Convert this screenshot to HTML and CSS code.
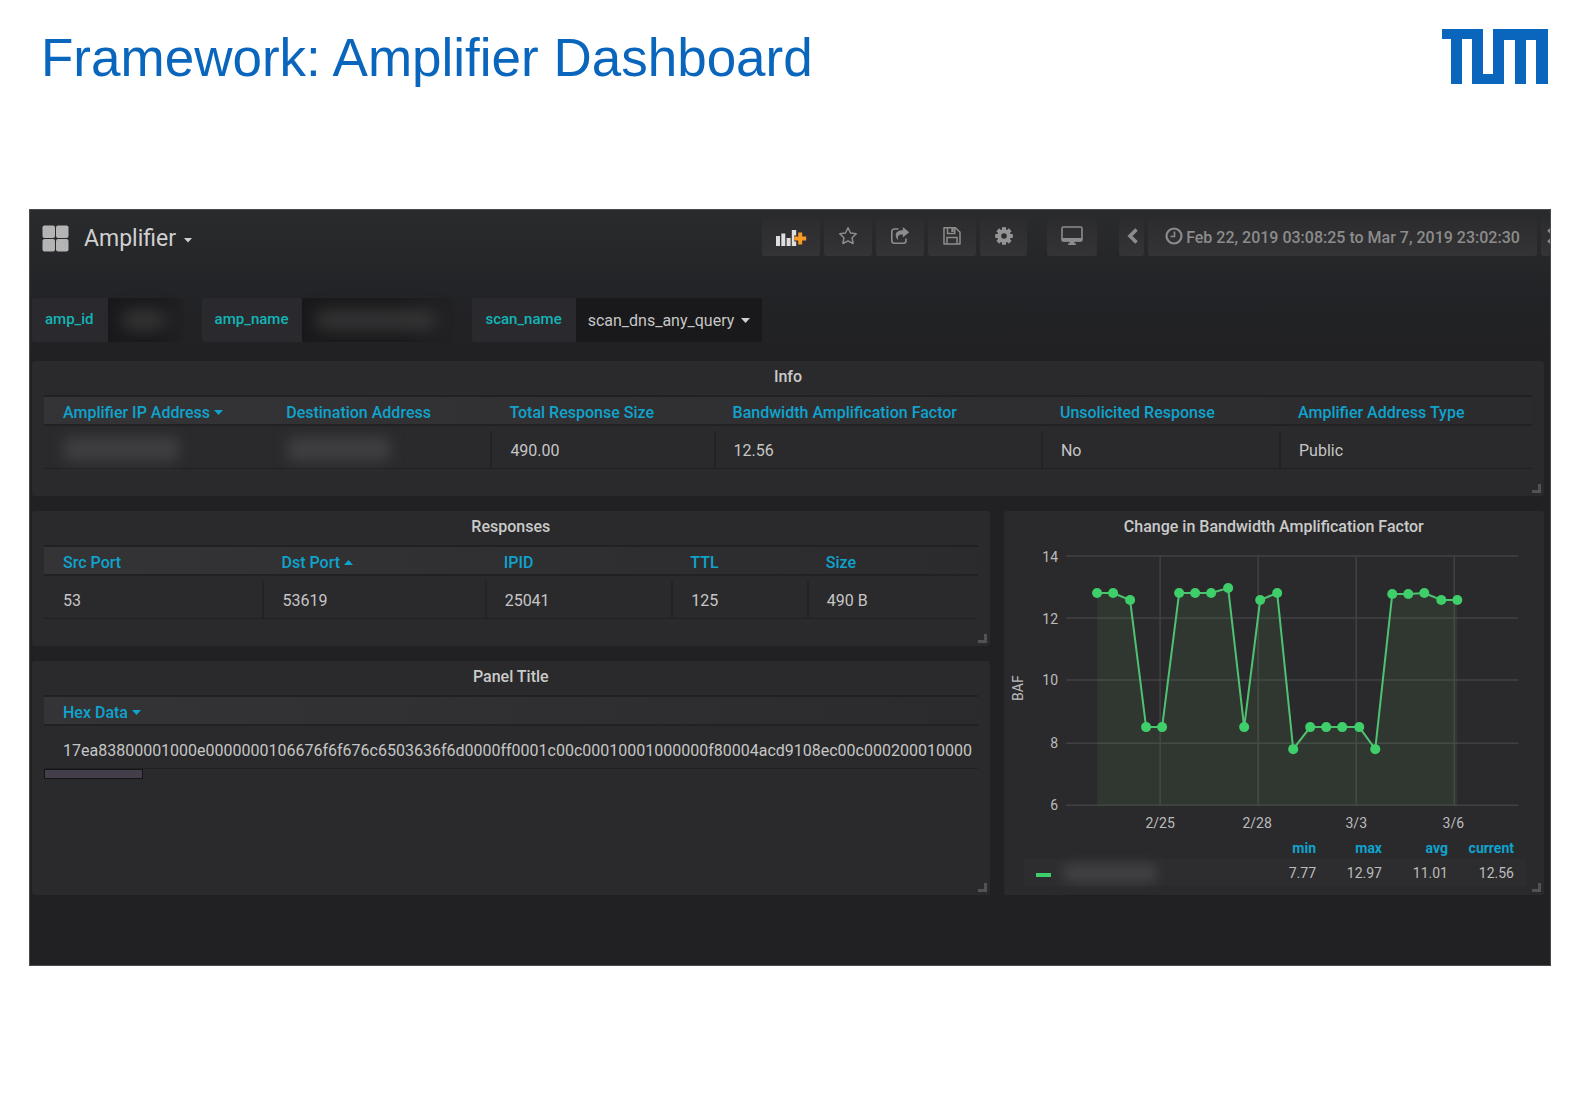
FILE: index.html
```html
<!DOCTYPE html>
<html lang="en">
<head>
<meta charset="utf-8">
<title>Framework: Amplifier Dashboard</title>
<link rel="stylesheet" href="styles.css">
</head>
<body>
<header class="slide-header">
  <h1>Framework: Amplifier Dashboard</h1>
  <svg class="logo" viewBox="0 0 106 55" role="img" aria-label="TUM"><path fill="#0a66bd" d="M0 0H41V45H51V0H106V55H94V11H84V55H73V11H62V55H30V10H20V55H9V10H0Z"/></svg>
</header>

<main class="dashboard">
  <nav class="toolbar" aria-label="Dashboard toolbar">
    <button class="dash-name" type="button">
      <svg width="27" height="27" viewBox="0 0 27 27" fill="#b4b4b4"><rect x="0.500" y="0.500" width="12.500" height="12.500" rx="2"/><rect x="14" y="0.500" width="12.500" height="12.500" rx="2"/><rect x="0.500" y="14" width="12.500" height="12.500" rx="2"/><rect x="14" y="14" width="12.500" height="12.500" rx="2"/></svg>
      <span>Amplifier</span>
      <svg class="name-caret" width="8" height="5" viewBox="0 0 8 5"><path fill="#d0d0d0" d="M0 0H8L4 4.500Z"/></svg>
    </button>
    <div class="actions">
      <button class="btn btn-add" type="button" aria-label="Add panel">
        <svg width="31" height="18" viewBox="0 0 31 18"><path fill="#dedede" d="M0 7h4v10H0zM5.300 4.500h4V17h-4zM10.600 9h4v8h-4zM15.800 1h4.400v5.500h-2v6h2V17h-4.400z"/><path fill="#f59a23" d="M22.200 3.500h4v4h4v4h-4v4h-4v-4h-4v-4h4z"/></svg>
      </button>
      <button class="btn" type="button" aria-label="Star">
        <svg width="20" height="20" viewBox="0 0 20 20"><path fill="none" stroke="#8c8c8c" stroke-width="1.500" stroke-linejoin="round" d="M10 1.800l2.500 5.200 5.700.8-4.100 4 1 5.700L10 14.800l-5.100 2.700 1-5.700-4.100-4 5.700-.8z"/></svg>
      </button>
      <button class="btn" type="button" aria-label="Share">
        <svg width="20" height="20" viewBox="0 0 20 20"><path fill="none" stroke="#8c8c8c" stroke-width="1.600" d="M8.500 3H4.500Q1.800 3 1.800 5.700V14.500Q1.800 17.200 4.500 17.200H13.300Q16 17.200 16 14.500V12.500"/><path fill="#8c8c8c" d="M12.800 1l6.400 5.300-6.400 5.300V8.500C8.700 8.400 7 10 8.300 14.300 4.600 11 3.900 4.300 12.800 4.200z"/></svg>
      </button>
      <button class="btn" type="button" aria-label="Save">
        <svg width="20" height="20" viewBox="0 0 20 20"><g fill="none" stroke="#8c8c8c" stroke-width="1.500"><path stroke-linejoin="round" d="M2 1.800H13.500L18 6.300V18H2Z"/><path d="M5 18V11.500H15V18M5.500 2V7.500H12.800V2"/></g><path fill="#8c8c8c" d="M9.300 2h2.400v4H9.300z"/></svg>
      </button>
      <button class="btn btn-gear" type="button" aria-label="Settings">
        <svg width="20" height="20" viewBox="-10 -10 20 20"><g fill="#949494"><rect x="-2" y="-8.800" width="4" height="17.600"/><rect x="-2" y="-8.800" width="4" height="17.600" transform="rotate(45)"/><rect x="-2" y="-8.800" width="4" height="17.600" transform="rotate(90)"/><rect x="-2" y="-8.800" width="4" height="17.600" transform="rotate(135)"/><circle r="6.700"/></g><circle r="2.800" fill="#2f2f31"/></svg>
      </button>
      <button class="btn btn-tv" type="button" aria-label="Cycle view mode">
        <svg width="24" height="22" viewBox="0 0 24 22"><rect x="2" y="2" width="20" height="14" rx="1.500" fill="none" stroke="#8c8c8c" stroke-width="1.600"/><path fill="#8c8c8c" d="M2 13h20v3.500H2zM9.500 16h5v2.500H16V20H8v-1.500h1.500z"/></svg>
      </button>
      <button class="btn btn-shift" type="button" aria-label="Shift time backwards">
        <svg width="12" height="18" viewBox="0 0 12 18"><path fill="none" stroke="#8c8c8c" stroke-width="3.600" d="M10.500 2.500L4 9L10.500 15.500"/></svg>
      </button>
      <button class="btn btn-time" type="button">
        <svg width="18" height="18" viewBox="0 0 18 18"><g fill="none" stroke="#8c8c8c"><circle cx="9" cy="9" r="7.500" stroke-width="2.200"/><path stroke-width="1.600" d="M9.500 4.500V9.500H5.500"/></g></svg>
        <span>Feb 22, 2019 03:08:25 to Mar 7, 2019 23:02:30</span>
      </button>
      <button class="btn btn-next" type="button" aria-label="Shift time forwards">
        <svg width="12" height="18" viewBox="0 0 12 18"><path fill="none" stroke="#8c8c8c" stroke-width="3.600" d="M1.500 2.500L8 9L1.500 15.500"/></svg>
      </button>
    </div>
  </nav>

  <form class="variables">
    <div class="variable">
      <label for="amp-id">amp_id</label>
      <div class="picker redacted"><select id="amp-id" class="pick-id"><option></option></select><span class="smudge"></span></div>
    </div>
    <div class="variable">
      <label for="amp-name">amp_name</label>
      <div class="picker redacted"><select id="amp-name" class="pick-name"><option></option></select><span class="smudge"></span></div>
    </div>
    <div class="variable">
      <label for="scan-name">scan_name</label>
      <div class="picker">
        <select id="scan-name" class="pick-scan"><option>scan_dns_any_query</option></select>
        <svg class="pick-caret" width="9" height="5" viewBox="0 0 9 5"><path fill="#d0d0d0" d="M0 0H9L4.500 5Z"/></svg>
      </div>
    </div>
  </form>

  <div class="grid">
    <section class="panel panel-wide">
      <h2>Info</h2>
      <table class="data">
        <colgroup><col class="w15"><col class="w15"><col class="w15"><col class="w22"><col class="w16"><col></colgroup>
        <thead><tr><th>Amplifier IP Address <svg width="9" height="5" viewBox="0 0 9 5"><path d="M0 0H9L4.500 5Z"/></svg></th><th>Destination Address</th><th>Total Response Size</th><th>Bandwidth Amplification Factor</th><th>Unsolicited Response</th><th>Amplifier Address Type</th></tr></thead>
        <tbody><tr><td><span class="smudge-text"></span></td><td class="no-rule"><span class="smudge-text smudge-short"></span></td><td>490.00</td><td>12.56</td><td>No</td><td>Public</td></tr></tbody>
      </table>
    </section>

    <section class="panel">
      <h2>Responses</h2>
      <table class="data">
        <colgroup><col class="r1"><col class="r2"><col class="r3"><col class="r4"><col></colgroup>
        <thead><tr><th>Src Port</th><th>Dst Port <svg width="9" height="5" viewBox="0 0 9 5"><path d="M0 5H9L4.500 0Z"/></svg></th><th>IPID</th><th>TTL</th><th>Size</th></tr></thead>
        <tbody><tr><td>53</td><td>53619</td><td>25041</td><td>125</td><td>490 B</td></tr></tbody>
      </table>
    </section>

    <section class="panel panel-graph">
      <h2>Change in Bandwidth Amplification Factor</h2>
      <svg class="chart" viewBox="0 1 540 291" role="img" aria-label="Bandwidth amplification factor over time">
        <g stroke="#414143" stroke-width="1.500">
          <path d="M62 12H514M62 74H514M62 136H514M62 199H514M62 261H514"/>
          <path d="M156 12V261M254 12V261M352 12V261M450 12V261"/>
        </g>
        <path fill="#58a850" fill-opacity=".11" d="M93 261V49H109L126 56L142 183H158L175 49H207L224 44L240 183L256 56L273 49L289 205L306 183H355L371 205L388 50H404L420 49L437 56H453V261Z"/>
        <polyline fill="none" stroke="#4fc272" stroke-width="2" points="93,49 109,49 126,56 142,183 158,183 175,49 191,49 207,49 224,44 240,183 256,56 273,49 289,205 306,183 322,183 338,183 355,183 371,205 388,50 404,50 420,49 437,56 453,56"/>
        <g fill="#3fcf6a">
          <circle cx="93" cy="49" r="5"/><circle cx="109" cy="49" r="5"/><circle cx="126" cy="56" r="5"/><circle cx="142" cy="183" r="5"/><circle cx="158" cy="183" r="5"/><circle cx="175" cy="49" r="5"/><circle cx="191" cy="49" r="5"/><circle cx="207" cy="49" r="5"/><circle cx="224" cy="44" r="5"/><circle cx="240" cy="183" r="5"/><circle cx="256" cy="56" r="5"/><circle cx="273" cy="49" r="5"/><circle cx="289" cy="205" r="5"/><circle cx="306" cy="183" r="5"/><circle cx="322" cy="183" r="5"/><circle cx="338" cy="183" r="5"/><circle cx="355" cy="183" r="5"/><circle cx="371" cy="205" r="5"/><circle cx="388" cy="50" r="5"/><circle cx="404" cy="50" r="5"/><circle cx="420" cy="49" r="5"/><circle cx="437" cy="56" r="5"/><circle cx="453" cy="56" r="5"/>
        </g>
        <g class="tick tick-y"><text x="54" y="18">14</text><text x="54" y="80">12</text><text x="54" y="141">10</text><text x="54" y="204">8</text><text x="54" y="266">6</text></g>
        <g class="tick tick-x"><text x="156" y="284">2/25</text><text x="253" y="284">2/28</text><text x="352" y="284">3/3</text><text x="449" y="284">3/6</text></g>
        <text class="axis-name" transform="translate(19 144) rotate(-90)">BAF</text>
      </svg>
      <table class="legend">
        <thead><tr><th class="series"></th><th>min</th><th>max</th><th>avg</th><th>current</th></tr></thead>
        <tbody><tr><td class="series"><span class="dash"></span><span class="smudge-series"></span></td><td>7.77</td><td>12.97</td><td>11.01</td><td>12.56</td></tr></tbody>
      </table>
    </section>

    <section class="panel panel-hex">
      <h2>Panel Title</h2>
      <div class="scroller">
        <table class="data">
          <thead><tr><th>Hex Data <svg width="9" height="5" viewBox="0 0 9 5"><path d="M0 0H9L4.500 5Z"/></svg></th></tr></thead>
          <tbody><tr><td>17ea83800001000e0000000106676f6f676c6503636f6d0000ff0001c00c00010001000000f80004acd9108ec00c000200010000</td></tr></tbody>
        </table>
      </div>
      <div class="thumb"></div>
    </section>
  </div>
</main>
</body>
</html>
```
FILE: styles.css
```css
* { box-sizing: border-box; }
body { margin: 0; background: #fff; font-family: Roboto, "Liberation Sans", sans-serif; font-size: 16px; color: #c6c6c6; }
button, select { font: inherit; color: inherit; border: 0; margin: 0; padding: 0; }

.slide-header { display: flex; justify-content: space-between; align-items: flex-start; padding: 28px 22px 0 41px; height: 209px; }
h1 { margin: 0; font: 400 53px/60px "Liberation Sans", Arial, sans-serif; color: #0a66bd; }
.logo { width: 106px; height: 55px; margin-top: 1px; flex: none; }

.dashboard { margin: 0 19px 0 29px; padding-bottom: 70px; border: 1px solid #4a4a4b; background: linear-gradient(#2a2b2d, #222326 90px, #212123 150px); overflow: hidden; }

.toolbar { display: flex; justify-content: space-between; height: 88px; padding: 9px 0 0 12px; }
.dash-name { display: flex; align-items: center; height: 38px; background: none; font-size: 23px; color: #d0d0d0; }
.dash-name span { margin-left: 15px; }
.name-caret { margin: 5px 0 0 8px; }
.actions { display: flex; gap: 4px; overflow: hidden; }
.btn { display: flex; align-items: center; justify-content: center; flex: none; width: 48px; height: 37px; border-radius: 3px; background: linear-gradient(#2c2c2e, #343436); color: #8c8c8c; overflow: hidden; }
.btn svg { margin-bottom: 3px; }
.btn-add svg { margin-bottom: 0; }
.btn-add { width: 58px; }
.btn-gear { width: 47px; }
.btn-tv { width: 50px; margin: 0 18px 0 16px; }
.btn-shift { width: 25px; }
.btn-time { width: 389px; font-weight: 500; gap: 3px; }
.btn-next { width: 9px; justify-content: flex-start; padding-left: 6px; }
.btn-next svg { flex: none; }

.variables { display: flex; padding-left: 2px; gap: 16px; margin-bottom: 19px; }
.variable { display: flex; height: 44px; font-weight: 500; }
.variable label { display: flex; align-items: center; padding: 0 14px 2px 13px; border-radius: 3px 0 0 3px; background: #2a2a2e; color: #13b4b6; font-size: 15px; }
.picker { position: relative; }
.picker select { appearance: none; height: 44px; background: #19191b; border-radius: 0 3px 3px 0; font-weight: 400; color: #c6c6c6; }
.pick-scan { width: 186px; padding: 0 12px; }
.pick-id { width: 78px; }
.pick-name { width: 154px; }
.redacted select { background: linear-gradient(90deg, #19191b 60%, #222225); }
.pick-caret { position: absolute; right: 12px; top: 20px; }
.smudge { position: absolute; inset: 12px 20px 12px 14px; border-radius: 8px; background: #353536; filter: blur(8px); }

.grid { display: grid; grid-template-columns: minmax(0, 957fr) minmax(0, 540fr); grid-template-rows: auto auto 234px; gap: 15px 14px; padding: 0 6px 0 2px; }
.panel { position: relative; min-height: 135px; padding: 0 12px; border-radius: 3px; background: #2a2a2c; }
.panel::after { content: ""; position: absolute; right: 3px; bottom: 3px; width: 6px; height: 6px; border: solid #525254; border-width: 0 3px 3px 0; }
.panel-wide { grid-column: 1 / -1; }
.panel-graph { grid-area: 2 / 2 / 4 / 3; padding: 0; }
h2 { margin: 0; padding-bottom: 2px; font-size: 16px; font-weight: 500; line-height: 32px; text-align: center; color: #cacaca; }

.data { width: 100%; border-collapse: separate; border-spacing: 0; table-layout: fixed; text-align: left; }
.data thead { background: linear-gradient(90deg, #343436, #2b2b2d); }
.data th { padding: 5px 0 0 19px; border: solid #212123; border-width: 2px 0; font-weight: 500; line-height: 22px; color: #0fa3cd; white-space: nowrap; }
.data th svg { fill: #0fa3cd; vertical-align: 3px; }
.data td { padding: 7px 0 0 20px; height: 43px; line-height: 35px; border-bottom: 1px solid #212123; white-space: nowrap; }
.data td:first-child { padding-left: 19px; }
.data td + td { background: linear-gradient(#232325, #232325) left bottom / 2px 37px no-repeat; }
.data td.no-rule { background: none; }
.w15 { width: 15%; } .w22 { width: 22%; } .w16 { width: 16%; }
.r1 { width: 23.4%; } .r2 { width: 23.8%; } .r3 { width: 20%; } .r4 { width: 14.5%; }
.smudge-text { display: block; width: 116px; height: 24px; margin-bottom: 3px; border-radius: 8px; background: #3f3f41; filter: blur(7px); }
.smudge-short { width: 104px; }

.scroller { overflow: hidden; }
.thumb { width: 99px; height: 10px; border: 1px solid #151518; background: #433e4a; }

.chart { display: block; width: 100%; height: auto; }
.tick, .axis-name { fill: #bcbcbc; font-size: 14px; }
.tick-y { text-anchor: end; }
.tick-x, .axis-name { text-anchor: middle; }
.legend { width: calc(100% - 38px); margin-left: 20px; border-spacing: 0; table-layout: fixed; font-size: 14px; text-align: right; }
.legend th { padding: 0 12px 0 0; height: 23px; color: #0fa3cd; font-weight: 700; }
.legend td { padding: 0 12px 0 0; height: 27px; background: #2d2d2f; color: #bcbcbc; }
.legend th:not(.series) { width: 66px; }
.legend td.series { text-align: left; padding: 0 0 0 12px; }
.dash { display: inline-block; width: 15px; height: 4px; background: #3fcf6a; }
.smudge-series { display: inline-block; width: 94px; height: 18px; margin-left: 12px; border-radius: 6px; background: #414143; filter: blur(6px); vertical-align: middle; }
```
